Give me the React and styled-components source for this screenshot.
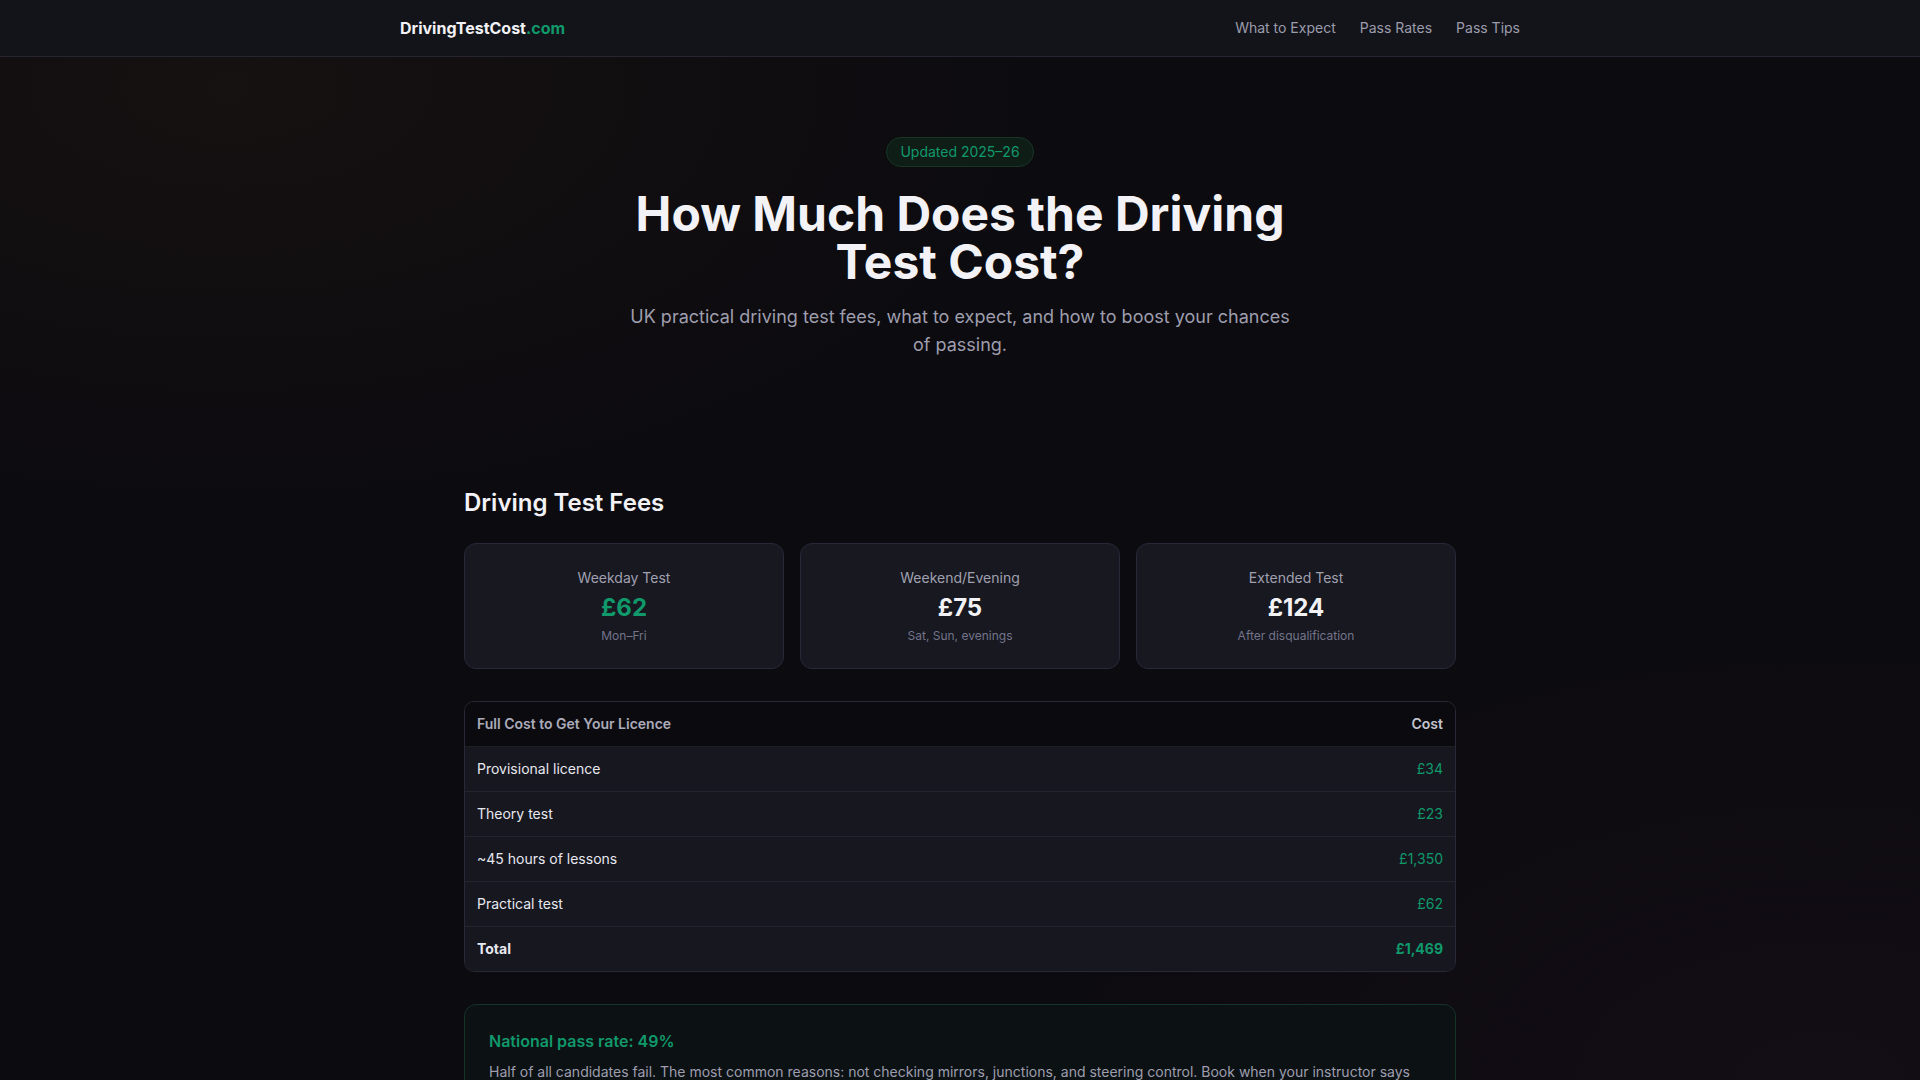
import styled, { createGlobalStyle } from "styled-components";

const GlobalStyle = createGlobalStyle`
	* {
		box-sizing: border-box;
	}
	html,
	body {
		margin: 0;
		padding: 0;
	}
	body {
		min-height: 100vh;
		font-family: Inter, "Noto Sans", "Liberation Sans", sans-serif;
		color: #ededf2;
		background-color: #0c0b0f;
		background-image:
			radial-gradient(ellipse 60% 55% at 12% 8%, rgba(120, 80, 40, 0.09), transparent 70%),
			radial-gradient(ellipse 60% 60% at 95% 100%, rgba(110, 40, 110, 0.07), transparent 70%);
		background-attachment: fixed;
		-webkit-font-smoothing: antialiased;
	}
`;

const green = "#10996b";

const Nav = styled.header`
	height: 57px;
	background: #13141a;
	border-bottom: 1px solid #262633;
`;

const NavInner = styled.div`
	max-width: 1152px;
	height: 100%;
	margin: 0 auto;
	padding: 0 16px;
	display: flex;
	align-items: center;
	justify-content: space-between;
`;

const Logo = styled.a`
	font-size: 16px;
	font-weight: 700;
	color: #f2f2f6;
	text-decoration: none;
	span {
		color: ${green};
	}
`;

const NavLinks = styled.nav`
	display: flex;
	gap: 24px;
`;

const NavLink = styled.a`
	font-size: 14px;
	line-height: 20px;
	color: #9c9cac;
	text-decoration: none;
`;

const Hero = styled.section`
	padding: 80px 16px 64px;
	display: flex;
	flex-direction: column;
	align-items: center;
	text-align: center;
`;

const Badge = styled.span`
	display: inline-block;
	padding: 4px 13px;
	font-size: 14px;
	line-height: 20px;
	color: ${green};
	background: #0f1d17;
	border: 1px solid #173628;
	border-radius: 999px;
	margin-bottom: 23px;
`;

const Title = styled.h1`
	max-width: 672px;
	margin: 0;
	font-size: 48px;
	line-height: 1;
	font-weight: 700;
	color: #f2f2f7;
`;

const Lead = styled.p`
	max-width: 672px;
	margin: 17px 0 0;
	font-size: 18px;
	line-height: 28px;
	color: #9e9eae;
`;

const Main = styled.main`
	max-width: 1024px;
	margin: 0 auto;
	padding: 64px 16px 64px;
`;

const SectionTitle = styled.h2`
	margin: 0 0 24px;
	font-size: 24px;
	line-height: 32px;
	font-weight: 600;
	color: #f2f2f7;
`;

const Cards = styled.div`
	display: grid;
	grid-template-columns: repeat(3, 1fr);
	gap: 16px;
`;

const Card = styled.div`
	background: #171820;
	border: 1px solid #282936;
	border-radius: 12px;
	padding: 24px;
	text-align: center;
`;

const CardLabel = styled.div`
	font-size: 14px;
	line-height: 20px;
	color: #a0a0b0;
`;

const CardPrice = styled.div`
	margin-top: 4px;
	font-size: 24px;
	line-height: 32px;
	font-weight: 700;
	color: ${(p) => (p.$accent ? green : "#f2f2f7")};
`;

const CardNote = styled.div`
	margin-top: 4px;
	font-size: 12px;
	line-height: 16px;
	color: #74748a;
`;

const TableWrap = styled.div`
	margin-top: 32px;
	border: 1px solid #282936;
	border-radius: 10px;
	overflow: hidden;
`;

const Table = styled.table`
	width: 100%;
	border-collapse: collapse;
	font-size: 14px;
	line-height: 20px;
`;

const Th = styled.th`
	padding: 12px;
	background: #0b0b0f;
	font-weight: 600;
	color: ${(p) => (p.$right ? "#c4c4d0" : "#ababbb")};
	text-align: ${(p) => (p.$right ? "right" : "left")};
`;

const Row = styled.tr`
	background: #16171f;
	& + & td {
		border-top: 1px solid #23242e;
	}
	thead + tbody &:first-child td {
		border-top: 1px solid #1d1e26;
	}
`;

const Td = styled.td`
	padding: 12px;
	color: ${(p) => (p.$cost ? green : "#e8e8ef")};
	font-weight: ${(p) => (p.$bold ? 700 : 400)};
	text-align: ${(p) => (p.$cost ? "right" : "left")};
`;

const Callout = styled.div`
	margin-top: 32px;
	padding: 24px;
	background: #0c1114;
	border: 1px solid #143427;
	border-radius: 12px;
`;

const CalloutTitle = styled.h3`
	margin: 0;
	font-size: 16px;
	line-height: 24px;
	font-weight: 600;
	color: ${green};
`;

const CalloutText = styled.p`
	margin: 8px 0 0;
	font-size: 14px;
	line-height: 22px;
	color: #9e9eae;
`;

const fees = [
	{ label: "Weekday Test", price: "£62", note: "Mon–Fri", accent: true },
	{ label: "Weekend/Evening", price: "£75", note: "Sat, Sun, evenings" },
	{ label: "Extended Test", price: "£124", note: "After disqualification" },
];

const costs = [
	{ item: "Provisional licence", cost: "£34" },
	{ item: "Theory test", cost: "£23" },
	{ item: "~45 hours of lessons", cost: "£1,350" },
	{ item: "Practical test", cost: "£62" },
	{ item: "Total", cost: "£1,469", total: true },
];

export default function App() {
	return (
		<>
			<GlobalStyle />
			<Nav>
				<NavInner>
					<Logo href="#">
						DrivingTestCost<span>.com</span>
					</Logo>
					<NavLinks>
						<NavLink href="#">What to Expect</NavLink>
						<NavLink href="#">Pass Rates</NavLink>
						<NavLink href="#">Pass Tips</NavLink>
					</NavLinks>
				</NavInner>
			</Nav>

			<Hero>
				<Badge>Updated 2025–26</Badge>
				<Title>How Much Does the Driving Test Cost?</Title>
				<Lead>
					UK practical driving test fees, what to expect, and how to boost your chances of
					passing.
				</Lead>
			</Hero>

			<Main>
				<SectionTitle>Driving Test Fees</SectionTitle>
				<Cards>
					{fees.map((f) => (
						<Card key={f.label}>
							<CardLabel>{f.label}</CardLabel>
							<CardPrice $accent={f.accent}>{f.price}</CardPrice>
							<CardNote>{f.note}</CardNote>
						</Card>
					))}
				</Cards>

				<TableWrap>
					<Table>
						<thead>
							<tr>
								<Th>Full Cost to Get Your Licence</Th>
								<Th $right>Cost</Th>
							</tr>
						</thead>
						<tbody>
							{costs.map((c) => (
								<Row key={c.item}>
									<Td $bold={c.total}>{c.item}</Td>
									<Td $cost $bold={c.total}>
										{c.cost}
									</Td>
								</Row>
							))}
						</tbody>
					</Table>
				</TableWrap>

				<Callout>
					<CalloutTitle>National pass rate: 49%</CalloutTitle>
					<CalloutText>
						Half of all candidates fail. The most common reasons: not checking mirrors,
						junctions, and steering control. Book when your instructor says you're ready, not
						when you feel impatient.
					</CalloutText>
				</Callout>
			</Main>
		</>
	);
}
